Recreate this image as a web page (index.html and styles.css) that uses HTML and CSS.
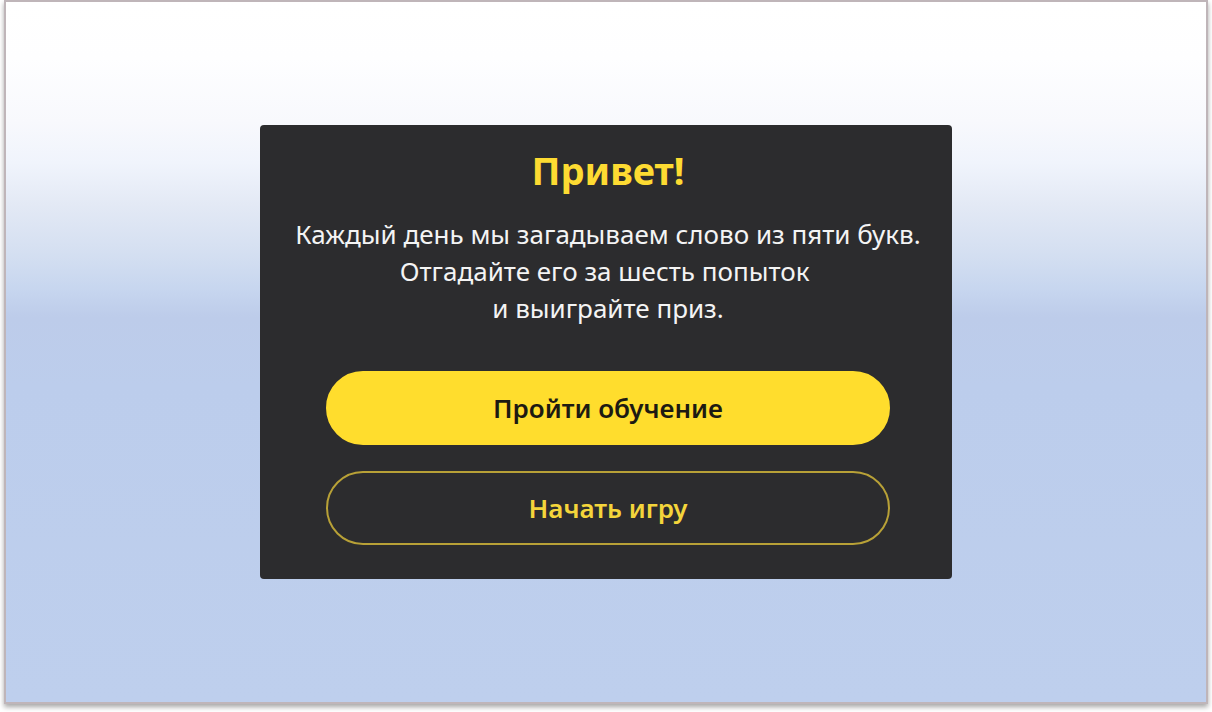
FILE: index.html
```html
<!DOCTYPE html>
<html lang="ru">
<head>
<meta charset="utf-8">
<meta name="viewport" content="width=device-width, initial-scale=1">
<title>Привет!</title>
<link rel="stylesheet" href="styles.css">
</head>
<body>
<main class="stage">
  <section class="dialog" aria-labelledby="dialog-title">
    <h1 class="dialog__title" id="dialog-title">Привет!</h1>
    <p class="dialog__text">Каждый день мы загадываем слово из пяти букв.<br>Отгадайте его за шесть попыток&nbsp;<br>и выиграйте приз.</p>
    <div class="dialog__actions">
      <button class="button button--primary" type="button">Пройти обучение</button>
      <button class="button button--outline" type="button">Начать игру</button>
    </div>
  </section>
</main>
</body>
</html>
```
FILE: styles.css
```css
* {
  box-sizing: border-box;
}

body {
  margin: 0;
  min-height: 100vh;
  padding: 0 4px 8px;
  display: flex;
  background: #fff;
  font-family: "Noto Sans", "Open Sans", sans-serif;
}

.stage {
  flex: 1;
  display: flex;
  align-items: center;
  justify-content: center;
  border: 2px solid #bfb5b9;
  background: linear-gradient(
    #fff 0%,
    #fefeff 8%,
    #f8f9fd 17%,
    #f0f4fc 23%,
    #e3e9f5 29%,
    #d4dff1 36%,
    #c7d6ef 41%,
    #bdccea 45%,
    #bccdec 55%,
    #becfed 100%
  );
  box-shadow: 0 3px 5px rgba(0, 0, 0, 0.35);
}

.dialog {
  width: 100%;
  max-width: 692px;
  padding: 18px 20px 34px 24px;
  border-radius: 4px;
  background: #2c2c2e;
  text-align: center;
}

.dialog__title {
  margin: 0 0 19px;
  color: #fddb32;
  font-size: 38px;
  line-height: 54px;
}

.dialog__text {
  margin: 0 0 44px;
  color: #f4f4f4;
  font-size: 26px;
  line-height: 37px;
}

.dialog__actions {
  display: flex;
  flex-direction: column;
  gap: 26px;
  padding: 0 42px;
}

.button {
  width: 100%;
  padding: 15px 24px;
  border: 2px solid #ffdd2d;
  border-radius: 40px;
  font-family: inherit;
  font-size: 26px;
  font-weight: 600;
  line-height: 40px;
  cursor: pointer;
}

.button--primary {
  background: #ffdd2d;
  color: #1d1a12;
}

.button--outline {
  border-color: #b8a137;
  background: transparent;
  color: #f4d53b;
}
```
